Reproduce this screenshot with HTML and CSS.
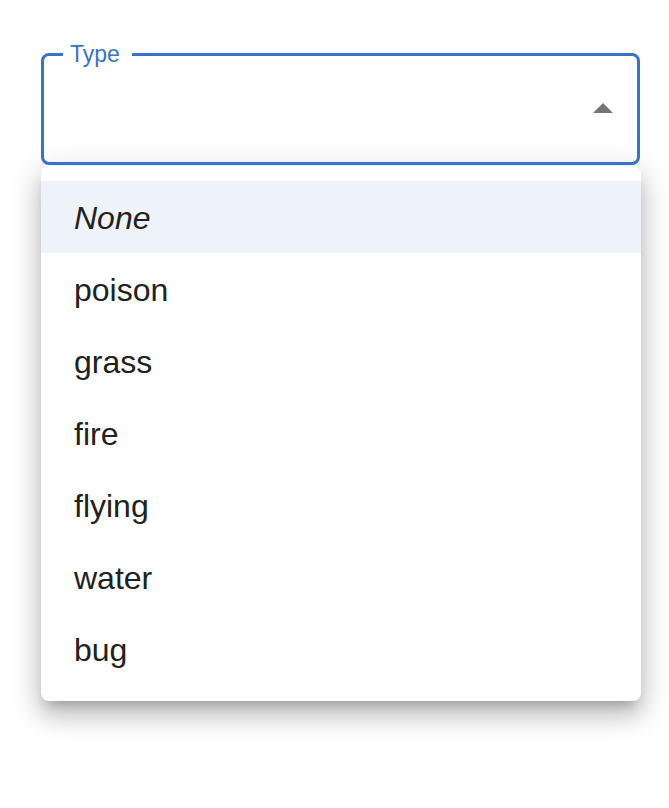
FILE: index.html
```html
<!DOCTYPE html>
<html>
<head>
<meta charset="utf-8">
<link rel="stylesheet" href="styles.css">
</head>
<body>
<div class="page">
  <div class="field">
    <fieldset class="outline"><legend class="notch"><span>Type</span></legend></fieldset>
    <label class="label">Type</label>
    <div class="select-value"></div>
    <svg class="arrow" width="20" height="10" viewBox="0 0 20 10"><path d="M0 10 L10 0 L20 10 Z" fill="#757575"/></svg>
  </div>
  <ul class="menu">
    <li class="item selected"><em>None</em></li>
    <li class="item">poison</li>
    <li class="item">grass</li>
    <li class="item">fire</li>
    <li class="item">flying</li>
    <li class="item">water</li>
    <li class="item">bug</li>
  </ul>
</div>
</body>
</html>
```

FILE: styles.css
```css
html, body {
  margin: 0;
  padding: 0;
  background: #ffffff;
  font-family: "Liberation Sans", Arial, sans-serif;
}

.page {
  padding: 54px 0 100px 41px;
  width: 600px;
}

.field {
  position: relative;
  width: 599px;
  height: 111px;
}

.outline {
  position: absolute;
  inset: 0;
  margin: 0;
  padding: 0 19px;
  border: 3px solid #3873c8;
  border-radius: 8px;
  box-sizing: border-box;
  top: -13px;
  height: 124px;
}

.notch {
  padding: 0 12px 0 7px;
  font-size: 23px;
  line-height: 26px;
  visibility: hidden;
}

.label {
  position: absolute;
  left: 29px;
  top: -13px;
  font-size: 23px;
  line-height: 26px;
  color: #3873c8;
}

.arrow {
  position: absolute;
  right: 27px;
  top: 49px;
}

.menu {
  list-style: none;
  margin: 1px 0 0 0;
  padding: 15px 0 16px;
  width: 600px;
  background: #ffffff;
  border-radius: 8px;
  box-shadow: 0 10px 12px -6px rgba(0,0,0,0.2), 0 16px 24px 2px rgba(0,0,0,0.14), 0 6px 30px 5px rgba(0,0,0,0.12);
}

.item {
  height: 72px;
  box-sizing: border-box;
  display: flex;
  align-items: center;
  padding: 3px 33px 0;
  font-size: 32px;
  color: #212121;
}

.item em {
  font-style: italic;
}

.selected {
  background: #eef3f9;
}
```
